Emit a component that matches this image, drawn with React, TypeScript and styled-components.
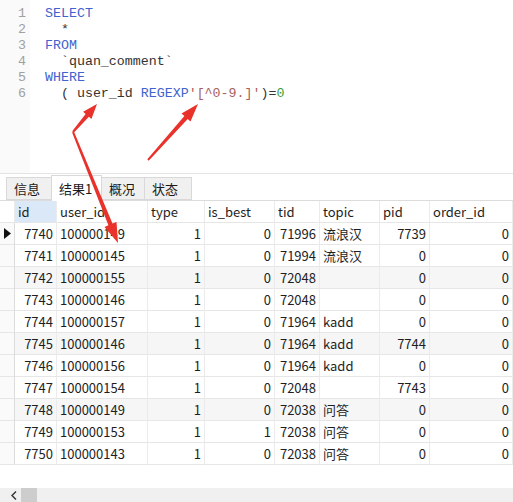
import styled, { createGlobalStyle } from 'styled-components';

const GlobalStyle = createGlobalStyle`
  html, body { margin: 0; padding: 0; background: #fff; }
  * { box-sizing: border-box; }
`;

const columns = [
  { key: 'id', title: 'id', width: 42, align: 'right' },
  { key: 'user_id', title: 'user_id', width: 91, align: 'left' },
  { key: 'type', title: 'type', width: 57, align: 'right' },
  { key: 'is_best', title: 'is_best', width: 70, align: 'right' },
  { key: 'tid', title: 'tid', width: 45, align: 'right' },
  { key: 'topic', title: 'topic', width: 60, align: 'left' },
  { key: 'pid', title: 'pid', width: 50, align: 'right' },
  { key: 'order_id', title: 'order_id', width: 83, align: 'right' },
] as const;

const gridTemplate = `15px ${columns.map((c) => `${c.width}px`).join(' ')}`;

const rows = [
  ['7740', '100000149', '1', '0', '71996', '流浪汉', '7739', '0'],
  ['7741', '100000145', '1', '0', '71994', '流浪汉', '0', '0'],
  ['7742', '100000155', '1', '0', '72048', '', '0', '0'],
  ['7743', '100000146', '1', '0', '72048', '', '0', '0'],
  ['7744', '100000157', '1', '0', '71964', 'kadd', '0', '0'],
  ['7745', '100000146', '1', '0', '71964', 'kadd', '7744', '0'],
  ['7746', '100000156', '1', '0', '71964', 'kadd', '0', '0'],
  ['7747', '100000154', '1', '0', '72048', '', '7743', '0'],
  ['7748', '100000149', '1', '0', '72038', '问答', '0', '0'],
  ['7749', '100000153', '1', '1', '72038', '问答', '0', '0'],
  ['7750', '100000143', '1', '0', '72038', '问答', '0', '0'],
];

const tabs = [
  { label: '信息', width: 46 },
  { label: '结果1', width: 51, active: true },
  { label: '概况', width: 44 },
  { label: '状态', width: 48 },
];

type Tok = { t: string; c?: 'kw' | 'str' | 'num' };
const sql: Tok[][] = [
  [{ t: 'SELECT', c: 'kw' }],
  [{ t: '  *' }],
  [{ t: 'FROM', c: 'kw' }],
  [{ t: '  `quan_comment`' }],
  [{ t: 'WHERE', c: 'kw' }],
  [
    { t: '  ( user_id ' },
    { t: 'REGEXP', c: 'kw' },
    { t: "'[^0-9.]'", c: 'str' },
    { t: ')=' },
    { t: '0', c: 'num' },
  ],
];

const Page = styled.div`
  position: relative;
  width: 513px;
  height: 502px;
  overflow: hidden;
  display: flex;
  flex-direction: column;
  background: #fff;
  font-family: 'Noto Sans CJK SC', 'Noto Sans', sans-serif;
`;

const Editor = styled.div`
  height: 174px;
  flex: none;
  display: flex;
  border-bottom: 1px solid #e4e4e4;
`;

const Gutter = styled.div`
  width: 30px;
  padding: 6px 4px 0 0;
  background: #fafafa;
  text-align: right;
  font-family: 'Liberation Mono', monospace;
  font-size: 13.3px;
  color: #a0a0a0;
`;

const Code = styled.div`
  padding: 6px 0 0 15px;
  font-family: 'Liberation Mono', monospace;
  font-size: 13.3px;
  color: #333;
`;

const Line = styled.div`
  height: 16px;
  line-height: 16px;
  white-space: pre;
`;

const tokColor = { kw: '#4262cf', str: '#a8605e', num: '#3e9e3e' };

const Token = styled.span<{ $c?: 'kw' | 'str' | 'num' }>`
  color: ${(p) => (p.$c ? tokColor[p.$c] : '#333')};
`;

const TabBar = styled.div`
  height: 27px;
  flex: none;
  display: flex;
  align-items: flex-end;
  padding-left: 6px;
  border-bottom: 1px solid #dcdcdc;
`;

const Tab = styled.div<{ $active?: boolean; $w: number }>`
  width: ${(p) => p.$w}px;
  height: ${(p) => (p.$active ? 26 : 23)}px;
  margin-bottom: ${(p) => (p.$active ? -1 : 0)}px;
  padding-left: 7px;
  display: flex;
  align-items: center;
  font-size: 13px;
  color: #1a1a1a;
  background: ${(p) => (p.$active ? '#fff' : '#f0f0f0')};
  border: 1px solid #d9d9d9;
  border-bottom: ${(p) => (p.$active ? 'none' : '1px solid #d9d9d9')};
  & + & {
    margin-left: -1px;
  }
`;

const Grid = styled.div`
  flex: 1;
  display: flex;
  flex-direction: column;
`;

const GridRow = styled.div<{ $shade?: boolean }>`
  display: grid;
  grid-template-columns: ${gridTemplate};
  height: 22px;
  background: ${(p) => (p.$shade ? '#f6f6f6' : '#fff')};
`;

const Cell = styled.div<{ $align?: string; $hl?: boolean; $head?: boolean }>`
  height: 22px;
  line-height: 21px;
  font-size: 13px;
  color: #1e1e1e;
  white-space: nowrap;
  overflow: hidden;
  text-align: ${(p) => (p.$align === 'right' ? 'right' : 'left')};
  padding: ${(p) => (p.$head || p.$align !== 'right' ? '0 0 0 3px' : '0 3px 0 0')};
  border-right: 1px solid #ebebeb;
  border-bottom: 1px solid #e6e6e6;
  background: ${(p) => (p.$hl ? '#dae8f8' : 'transparent')};
`;

const Indicator = styled.div`
  height: 22px;
  display: flex;
  align-items: center;
  justify-content: center;
  border-right: 1px solid #dcdcdc;
  border-bottom: 1px solid #e6e6e6;
  background: #fafafa;
`;

const HeadIndicator = styled(Indicator)`
  background: #fff;
  border-right: 1px solid #ebebeb;
`;

const Spacer = styled.div`
  flex: 1;
`;

const ScrollBar = styled.div`
  height: 14px;
  flex: none;
  display: flex;
  align-items: stretch;
  background: #f0f0f0;
  padding-left: 8px;
`;

const ScrollArrow = styled.div`
  width: 12px;
  display: flex;
  align-items: center;
  justify-content: center;
`;

const Thumb = styled.div`
  width: 16px;
  margin-left: 1px;
  background: #cdcdcd;
`;

const Overlay = styled.svg`
  position: absolute;
  left: 0;
  top: 0;
  pointer-events: none;
`;

function arrowPoints(x1: number, y1: number, x2: number, y2: number, headLen = 17, headW = 12) {
  const dx = x2 - x1;
  const dy = y2 - y1;
  const len = Math.hypot(dx, dy);
  const ux = dx / len;
  const uy = dy / len;
  const nx = -uy;
  const ny = ux;
  const bx = x2 - ux * headLen;
  const by = y2 - uy * headLen;
  const tail = 1;
  const neck = 2.2;
  const pts = [
    [x1 + nx * tail, y1 + ny * tail],
    [bx + nx * neck, by + ny * neck],
    [bx + nx * (headW / 2), by + ny * (headW / 2)],
    [x2, y2],
    [bx - nx * (headW / 2), by - ny * (headW / 2)],
    [bx - nx * neck, by - ny * neck],
    [x1 - nx * tail, y1 - ny * tail],
  ];
  return pts.map((p) => `${p[0].toFixed(1)},${p[1].toFixed(1)}`).join(' ');
}

export default function App() {
  return (
    <Page>
      <GlobalStyle />
      <Editor>
        <Gutter>
          {sql.map((_, i) => (
            <Line key={i}>{i + 1}</Line>
          ))}
        </Gutter>
        <Code>
          {sql.map((line, i) => (
            <Line key={i}>
              {line.map((tok, j) => (
                <Token key={j} $c={tok.c}>
                  {tok.t}
                </Token>
              ))}
            </Line>
          ))}
        </Code>
      </Editor>

      <TabBar>
        {tabs.map((t) => (
          <Tab key={t.label} $active={t.active} $w={t.width}>
            {t.label}
          </Tab>
        ))}
      </TabBar>

      <Grid>
        <GridRow>
          <HeadIndicator />
          {columns.map((c, i) => (
            <Cell key={c.key} $head $hl={i === 0}>
              {c.title}
            </Cell>
          ))}
        </GridRow>
        {rows.map((r, ri) => (
          <GridRow key={ri} $shade={ri % 3 === 2}>
            <Indicator>
              {ri === 0 && (
                <svg width="7" height="11" viewBox="0 0 7 11">
                  <path d="M0 0 L7 5.5 L0 11 Z" fill="#111" />
                </svg>
              )}
            </Indicator>
            {r.map((v, ci) => (
              <Cell key={ci} $align={columns[ci].align}>
                {v}
              </Cell>
            ))}
          </GridRow>
        ))}
        <Spacer />
        <ScrollBar>
          <ScrollArrow>
            <svg width="6" height="9" viewBox="0 0 6 9">
              <path d="M5 0.5 L1 4.5 L5 8.5" fill="none" stroke="#333" strokeWidth="1.4" />
            </svg>
          </ScrollArrow>
          <Thumb />
        </ScrollBar>
      </Grid>

      <Overlay width="513" height="502">
        <g fill="#e8322b">
          <polygon points={arrowPoints(73, 132, 97, 104, 15, 11)} />
          <polygon points={arrowPoints(73, 132, 118, 243, 20, 13)} />
          <polygon points={arrowPoints(148, 160, 198, 104, 18, 12)} />
        </g>
      </Overlay>
    </Page>
  );
}
